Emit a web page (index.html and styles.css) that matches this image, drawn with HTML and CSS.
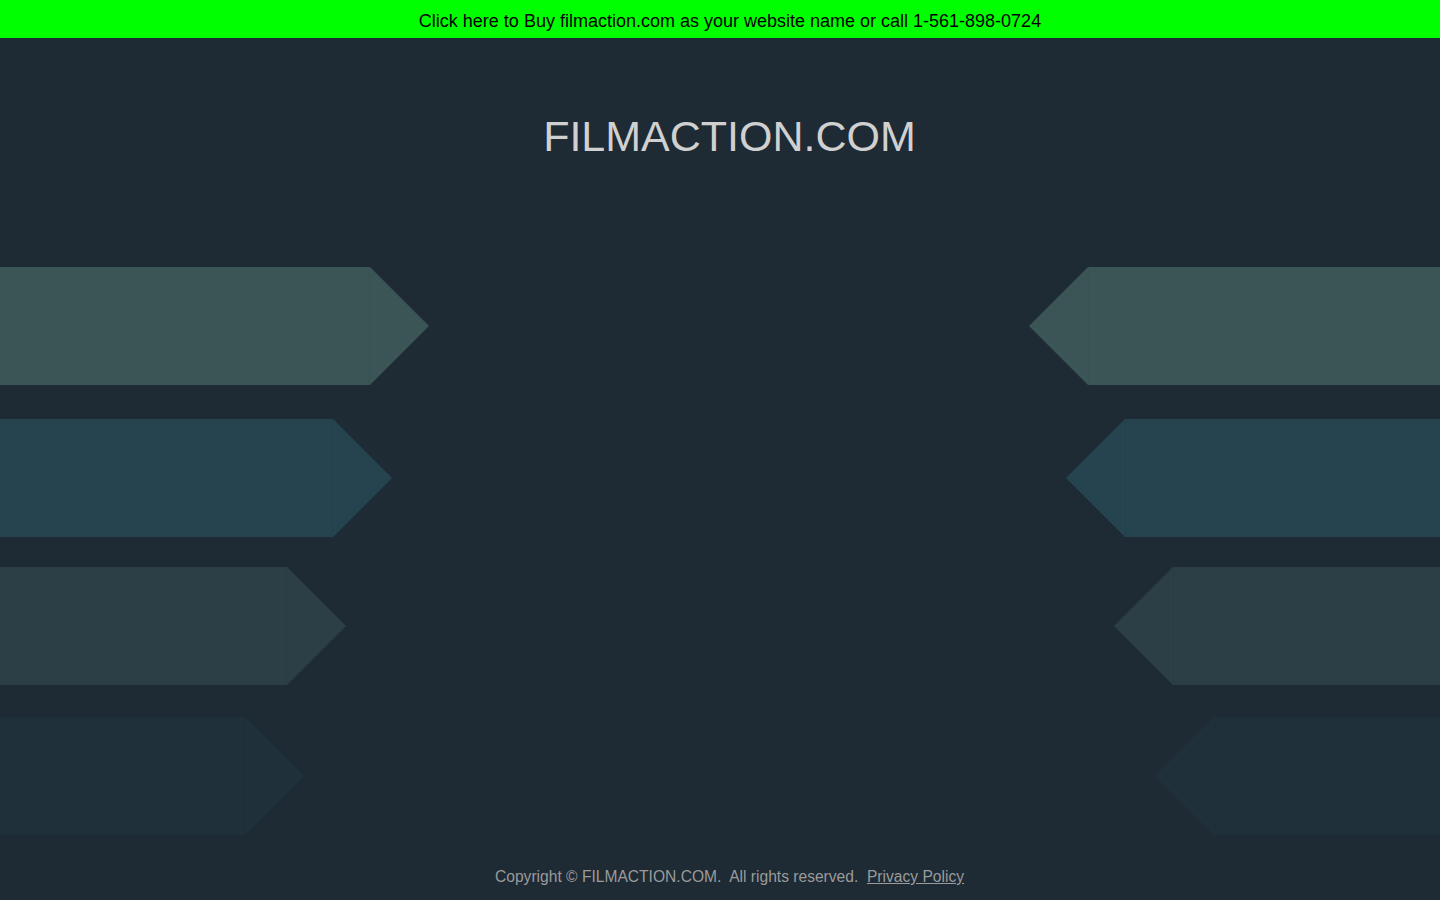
FILE: index.html
```html
<!DOCTYPE html>
<html lang="en">
<head>
<meta charset="utf-8">
<title>filmaction.com</title>
<link rel="stylesheet" href="styles.css">
</head>
<body>
<div class="topbar"><a class="buy" href="#">Click here to Buy filmaction.com as your website name or call 1-561-898-0724</a></div>
<h1 class="title">FILMACTION.COM</h1>
<div class="arrows">
  <div class="row row1">
    <div class="arrow right"><div class="body"></div><div class="tip"></div></div>
    <div class="arrow left"><div class="tip"></div><div class="body"></div></div>
  </div>
  <div class="row row2">
    <div class="arrow right"><div class="body"></div><div class="tip"></div></div>
    <div class="arrow left"><div class="tip"></div><div class="body"></div></div>
  </div>
  <div class="row row3">
    <div class="arrow right"><div class="body"></div><div class="tip"></div></div>
    <div class="arrow left"><div class="tip"></div><div class="body"></div></div>
  </div>
  <div class="row row4">
    <div class="arrow right"><div class="body"></div><div class="tip"></div></div>
    <div class="arrow left"><div class="tip"></div><div class="body"></div></div>
  </div>
</div>
<footer class="footer">Copyright &copy; FILMACTION.COM.&nbsp; All rights reserved.&nbsp; <a href="#" class="privacy">Privacy Policy</a></footer>
</body>
</html>
```
FILE: styles.css
```css
html, body {
  margin: 0;
  padding: 0;
}
body {
  background: #1e2a34;
  font-family: "Liberation Sans", Arial, sans-serif;
  height: 900px;
  overflow: hidden;
}
.topbar {
  height: 38px;
  background: #00ff00;
  text-align: center;
  line-height: 42px;
  font-size: 18px;
  padding-left: 20px;
}
.buy {
  color: #000;
  text-decoration: none;
}
.title {
  margin: 0;
  padding-top: 73px;
  padding-left: 19px;
  height: 50px;
  line-height: 50px;
  text-align: center;
  font-weight: normal;
  font-size: 43px;
  color: #d0d0d0;
}
.arrows {
  margin-top: 106px;
  display: flex;
  flex-direction: column;
}
.row {
  display: flex;
  justify-content: space-between;
  height: 118px;
}
.row2 { margin-top: 34px; }
.row3 { margin-top: 30px; }
.row4 { margin-top: 32px; }
.arrow {
  display: flex;
  height: 118px;
}
.tip {
  width: 59px;
  height: 118px;
}
.right .tip { clip-path: polygon(0 0, 100% 50%, 0 100%); }
.left .tip { clip-path: polygon(100% 0, 0 50%, 100% 100%); }
.right .body { box-shadow: inset -1px 0 rgba(0, 0, 0, 0.04); }
.left .body { box-shadow: inset 1px 0 rgba(0, 0, 0, 0.04); }

.row1 .body, .row1 .tip { background: #3b5556; }
.row2 .body, .row2 .tip { background: #25444f; }
.row3 .body, .row3 .tip { background: #2c3f46; }
.row4 .body, .row4 .tip { background: #1f303b; }

.row1 .right .body { width: 370px; }
.row2 .right .body { width: 333px; }
.row3 .right .body { width: 287px; }
.row4 .right .body { width: 245px; }

.row1 .left .body { width: 352px; }
.row2 .left .body { width: 315px; }
.row3 .left .body { width: 267px; }
.row4 .left .body { width: 226px; }

.footer {
  margin-top: 33px;
  padding-left: 19px;
  text-align: center;
  font-size: 15.6px;
  color: #9b9b9b;
}
.privacy {
  color: #9b9b9b;
  text-decoration: underline;
}
```
